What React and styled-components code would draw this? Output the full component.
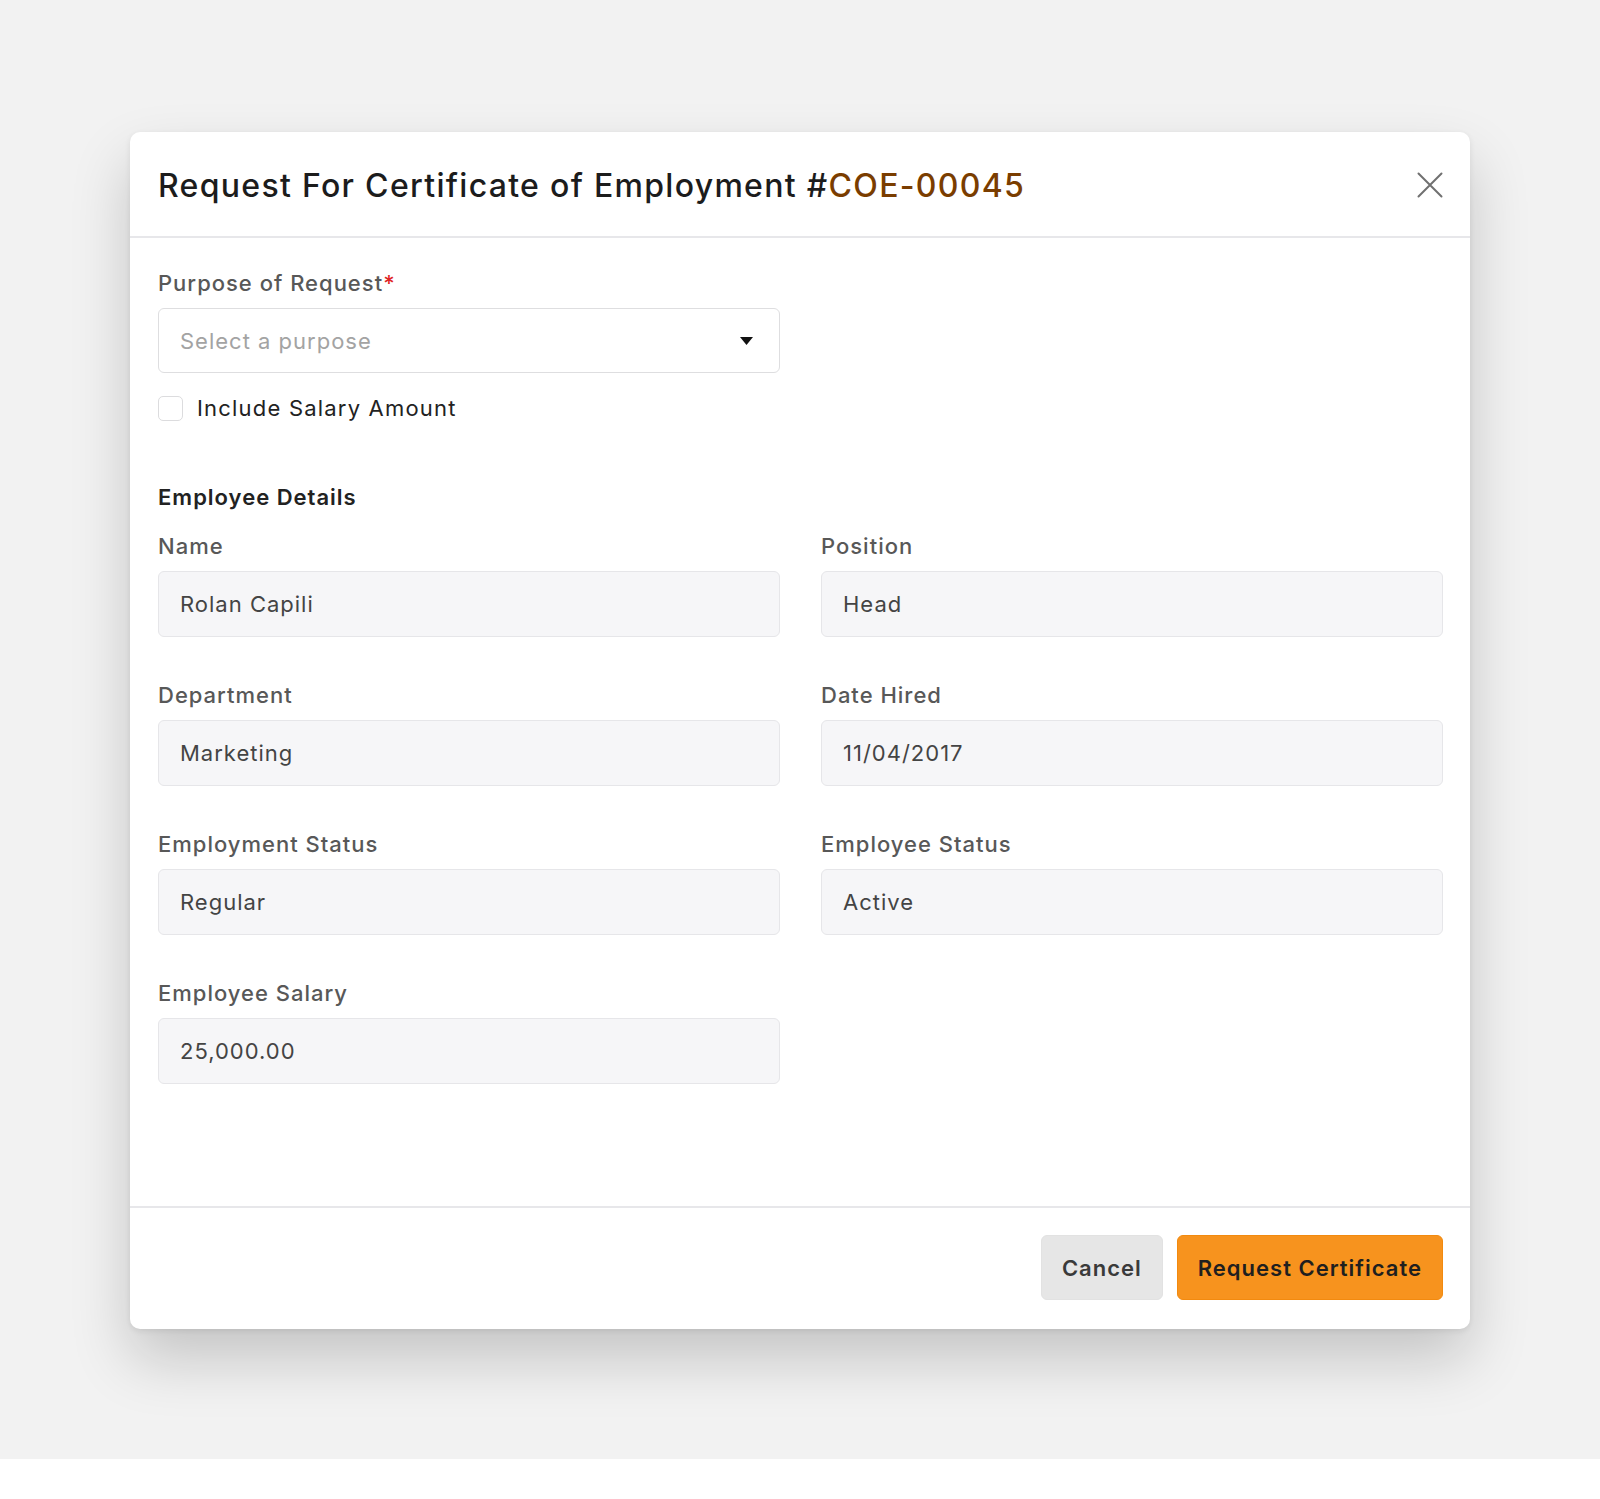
import React from "react";
import styled, { createGlobalStyle } from "styled-components";

const GlobalStyle = createGlobalStyle`
  body {
    margin: 0;
    background: #ffffff;
    font-family: Inter, "Noto Sans", sans-serif;
  }
`;

const Backdrop = styled.div`
  height: 1459px;
  background-color: #f2f2f2;
  display: flex;
  justify-content: center;
  align-items: flex-start;
  padding-top: 132px;
  box-sizing: border-box;
`;

const Dialog = styled.div`
  width: 1340px;
  background-color: #fff;
  border-radius: 10px;
  box-shadow: 0 30px 60px rgba(0, 0, 0, 0.19), 0 2px 6px rgba(0, 0, 0, 0.08);
  display: flex;
  flex-direction: column;
`;

const Header = styled.div`
  height: 106px;
  padding: 2px 28px 0;
  box-sizing: border-box;
  display: flex;
  align-items: center;
  justify-content: space-between;
  border-bottom: 2px solid #e7e7ea;
`;

const Title = styled.h2`
  margin: 0;
  font-size: 32px;
  font-weight: 500;
  color: #1c1c1c;
  letter-spacing: 1.3px;
`;

const Code = styled.span`
  color: #7a3d00;
`;

const CloseButton = styled.button`
  border: none;
  background: none;
  padding: 0;
  width: 28px;
  height: 28px;
  display: flex;
  align-items: center;
  justify-content: center;
  cursor: pointer;
  margin-right: -2px;
`;

const Body = styled.div`
  padding: 31px 28px 122px;
  display: flex;
  flex-direction: column;
`;

const Label = styled.label`
  display: block;
  font-size: 22px;
  line-height: 28px;
  font-weight: 500;
  letter-spacing: 1px;
  color: #585858;
  margin-bottom: 11px;
`;

const Required = styled.span`
  color: #e02424;
`;

const SelectBox = styled.div`
  width: 622px;
  height: 65px;
  box-sizing: border-box;
  border: 1.5px solid #dedee0;
  border-radius: 6px;
  padding: 0 26px 0 21px;
  display: flex;
  align-items: center;
  justify-content: space-between;
  font-size: 22px;
  letter-spacing: 1px;
  color: #a3a3a3;
`;

const CheckRow = styled.label`
  margin-top: 21px;
  display: flex;
  align-items: center;
  gap: 14px;
  font-size: 22px;
  line-height: 28px;
  letter-spacing: 1.2px;
  color: #222;
`;

const CheckBox = styled.span`
  width: 25px;
  height: 25px;
  box-sizing: border-box;
  border: 1.5px solid #dcdcde;
  border-radius: 5px;
`;

const SectionTitle = styled.h3`
  margin: 61px 0 21px;
  font-size: 22px;
  line-height: 28px;
  font-weight: 600;
  letter-spacing: 1px;
  color: #222;
`;

const FieldGrid = styled.div`
  display: grid;
  grid-template-columns: 622px 622px;
  column-gap: 41px;
  row-gap: 44px;
`;

const Field = styled.div`
  display: flex;
  flex-direction: column;
`;

const ReadOnlyInput = styled.div`
  height: 66px;
  box-sizing: border-box;
  background-color: #f6f6f8;
  border: 1.5px solid #e6e6e9;
  border-radius: 6px;
  padding: 0 21px;
  display: flex;
  align-items: center;
  font-size: 22px;
  letter-spacing: 1px;
  color: #444;
`;

const Footer = styled.div`
  border-top: 2px solid #e7e7ea;
  padding: 27px 27px 29px;
  display: flex;
  justify-content: flex-end;
  gap: 14px;
`;

const Button = styled.button`
  height: 65px;
  padding: 0 20px;
  border-radius: 6px;
  font-family: inherit;
  font-size: 22px;
  font-weight: 600;
  letter-spacing: 1px;
  cursor: pointer;
  border: 1.5px solid ${(p) => (p.$primary ? "#f28a0f" : "#e2e2e2")};
  background-color: ${(p) => (p.$primary ? "#f7931e" : "#e6e6e6")};
  color: ${(p) => (p.$primary ? "#1f1f1f" : "#3a3a3a")};
`;

const fields = [
  { label: "Name", value: "Rolan Capili" },
  { label: "Position", value: "Head" },
  { label: "Department", value: "Marketing" },
  { label: "Date Hired", value: "11/04/2017" },
  { label: "Employment Status", value: "Regular" },
  { label: "Employee Status", value: "Active" },
  { label: "Employee Salary", value: "25,000.00" },
];

export default function App() {
  return (
    <>
      <GlobalStyle />
      <Backdrop>
        <Dialog>
          <Header>
            <Title>
              Request For Certificate of Employment #<Code>COE-00045</Code>
            </Title>
            <CloseButton aria-label="Close">
              <svg width="26" height="26" viewBox="0 0 26 26">
                <path d="M1.5 1.5 24.5 24.5 M24.5 1.5 1.5 24.5" stroke="#707070" strokeWidth="2" strokeLinecap="round" />
              </svg>
            </CloseButton>
          </Header>

          <Body>
            <Label>
              Purpose of Request<Required>*</Required>
            </Label>
            <SelectBox>
              <span>Select a purpose</span>
              <svg width="13" height="8" viewBox="0 0 13 8">
                <path d="M0 0h13L6.5 8z" fill="#111" />
              </svg>
            </SelectBox>
            <CheckRow>
              <CheckBox />
              Include Salary Amount
            </CheckRow>

            <SectionTitle>Employee Details</SectionTitle>
            <FieldGrid>
              {fields.map((f) => (
                <Field key={f.label}>
                  <Label>{f.label}</Label>
                  <ReadOnlyInput>{f.value}</ReadOnlyInput>
                </Field>
              ))}
            </FieldGrid>
          </Body>

          <Footer>
            <Button>Cancel</Button>
            <Button $primary>Request Certificate</Button>
          </Footer>
        </Dialog>
      </Backdrop>
    </>
  );
}
